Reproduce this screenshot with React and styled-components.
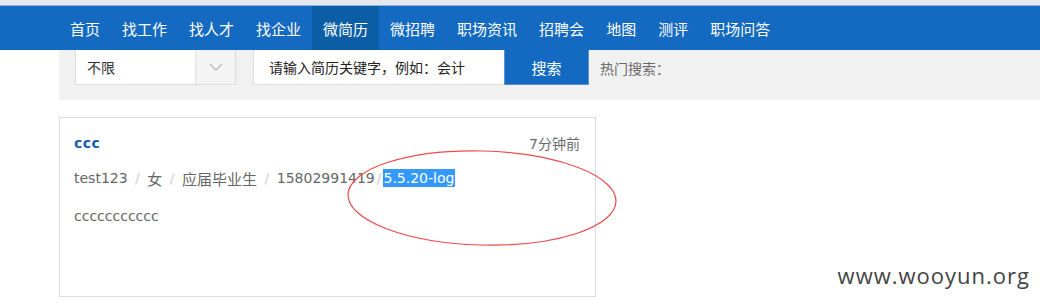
import React from 'react';
import styled, { createGlobalStyle } from 'styled-components';

const GlobalStyle = createGlobalStyle`
  html, body {
    margin: 0;
    padding: 0;
    background: #fff;
  }
  body {
    font-family: "DejaVu Sans", "Noto Sans CJK SC", sans-serif;
    overflow: hidden;
  }
`;

const Page = styled.div`
  position: relative;
  width: 1040px;
  height: 307px;
  overflow: hidden;
`;

const TopStrip = styled.div`
  height: 5px;
  background: #e4e8ee;
  border-bottom: 1px solid #8db3de;
`;

const NavBar = styled.nav`
  display: flex;
  height: 44px;
  padding-left: 59px;
  background: #1469c0;
`;

const NavItem = styled.a`
  display: flex;
  align-items: center;
  padding: 0 11px;
  color: #fff;
  font-family: "Noto Sans CJK SC", sans-serif;
  font-size: 15px;
  text-decoration: none;
  background: ${(p) => (p.$active ? '#0b5ea6' : 'transparent')};
`;

const SearchPanel = styled.div`
  display: flex;
  align-items: flex-start;
  margin-left: 59px;
  height: 50px;
  padding-left: 16px;
  background: #f1f1f1;
`;

const SelectBox = styled.div`
  display: flex;
  width: 159px;
  height: 34px;
  background: #fff;
  border: 1px solid #dcdcdc;
  border-top: none;
  margin-right: 17px;
`;

const SelectLabel = styled.div`
  flex: 1;
  display: flex;
  align-items: center;
  padding-left: 11px;
  font-family: "Noto Sans CJK SC", sans-serif;
  font-size: 14px;
  color: #333;
`;

const SelectArrow = styled.div`
  width: 39px;
  display: flex;
  align-items: center;
  justify-content: center;
  background: #f4f4f4;
  border-left: 1px solid #e2e2e2;
`;

const KeywordInput = styled.div`
  display: flex;
  align-items: center;
  width: 235px;
  height: 34px;
  padding-left: 15px;
  background: #fff;
  border-left: 1px solid #e0e0e0;
  border-bottom: 1px solid #dcdcdc;
  font-family: "Noto Sans CJK SC", sans-serif;
  font-size: 14px;
  color: #222;
`;

const SearchButton = styled.div`
  display: flex;
  align-items: center;
  justify-content: center;
  width: 83px;
  height: 34px;
  background: #1469c0;
  border: 1px solid #5b93d2;
  border-top: none;
  color: #fff;
  font-family: "Noto Sans CJK SC", sans-serif;
  font-size: 15px;
`;

const HotLabel = styled.div`
  display: flex;
  align-items: center;
  height: 35px;
  margin-left: 11px;
  font-family: "Noto Sans CJK SC", sans-serif;
  font-size: 14px;
  color: #6a6a6a;
`;

const Card = styled.div`
  width: 506px;
  height: 150px;
  margin: 17px 0 0 59px;
  padding: 14px 15px 14px 14px;
  border: 1px solid #dcdcdc;
  background: #fff;
`;

const CardHead = styled.div`
  display: flex;
  justify-content: space-between;
  align-items: center;
  height: 22px;
`;

const Name = styled.span`
  color: #1a5fb0;
  font-weight: bold;
  font-size: 14px;
  letter-spacing: 0.5px;
`;

const Time = styled.span`
  color: #6a6a6a;
  font-size: 14px;
`;

const Meta = styled.div`
  display: flex;
  align-items: center;
  margin-top: 14px;
  height: 20px;
  font-size: 14px;
  color: #666;
`;

const MetaItem = styled.span`
  font-size: ${(p) => (p.$cjk ? '15px' : '14px')};
`;

const Sep = styled.span`
  color: #d0d0d0;
  margin: ${(p) => (p.$tight ? '0 1px 0 2px' : '0 7.5px')};
`;

const Selected = styled.span`
  background: #3399ff;
  color: #fff;
  padding: 1px 1px;
`;

const Intro = styled.div`
  margin-top: 20px;
  font-size: 14px;
  color: #666;
`;

const Ellipse = styled.svg`
  position: absolute;
  left: 345px;
  top: 148px;
  pointer-events: none;
`;

const Watermark = styled.div`
  position: absolute;
  right: 10px;
  top: 260px;
  font-family: "Open Sans", "DejaVu Sans", sans-serif;
  font-size: 22px;
  color: #444;
  letter-spacing: 1px;
`;

const navItems = ['首页', '找工作', '找人才', '找企业', '微简历', '微招聘', '职场资讯', '招聘会', '地图', '测评', '职场问答'];

const meta = [
  { text: 'test123', cjk: false },
  { text: '女', cjk: true },
  { text: '应届毕业生', cjk: true },
  { text: '15802991419', cjk: false },
];

export default function App() {
  return (
    <Page>
      <GlobalStyle />
      <TopStrip />
      <NavBar>
        {navItems.map((n) => (
          <NavItem key={n} $active={n === '微简历'}>{n}</NavItem>
        ))}
      </NavBar>
      <SearchPanel>
        <SelectBox>
          <SelectLabel>不限</SelectLabel>
          <SelectArrow>
            <svg width="14" height="8" viewBox="0 0 14 8">
              <path d="M1 1 L7 7 L13 1" fill="none" stroke="#b8b8b8" strokeWidth="1.3" />
            </svg>
          </SelectArrow>
        </SelectBox>
        <KeywordInput>请输入简历关键字，例如：会计</KeywordInput>
        <SearchButton>搜索</SearchButton>
        <HotLabel>热门搜索：</HotLabel>
      </SearchPanel>
      <Card>
        <CardHead>
          <Name>ccc</Name>
          <Time>7分钟前</Time>
        </CardHead>
        <Meta>
          {meta.map((m, i) => (
            <React.Fragment key={m.text}>
              <MetaItem $cjk={m.cjk}>{m.text}</MetaItem>
              <Sep $tight={i === meta.length - 1}>/</Sep>
            </React.Fragment>
          ))}
          <Selected>5.5.20-log</Selected>
        </Meta>
        <Intro>ccccccccccc</Intro>
      </Card>
      <Ellipse width="276" height="102" viewBox="0 0 276 102">
        <ellipse cx="137" cy="50" rx="134" ry="47" fill="none" stroke="#ee4b4b" strokeWidth="1.2" transform="rotate(1.5 137 50)" />
      </Ellipse>
      <Watermark>www.wooyun.org</Watermark>
    </Page>
  );
}
